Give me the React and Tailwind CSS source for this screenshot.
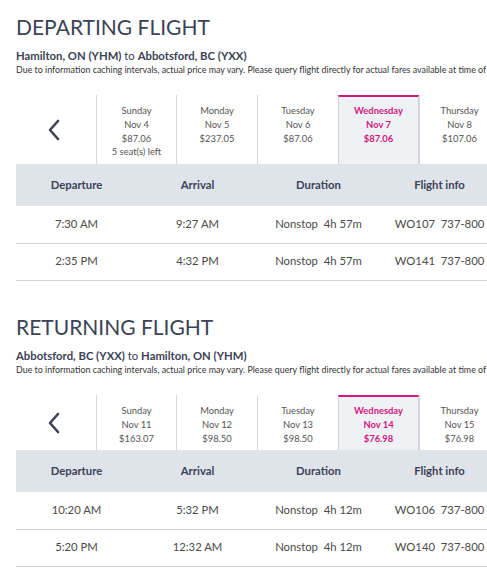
import React from "react";

function Chevron() {
  return (
    <svg width="14" height="22" viewBox="0 0 14 22" fill="none">
      <path d="M11 2 L3 11 L11 20" stroke="#3b4256" strokeWidth="2.6" strokeLinecap="round" strokeLinejoin="round" />
    </svg>
  );
}

function Tab({ day, date, price, extra, selected, w }) {
  if (selected) {
    return (
      <div className="w-[81px] shrink-0 border-t-2 border-t-[#d1187f] border-x border-x-[#cdd0d6] bg-[#f0f1f5] flex flex-col items-center pt-[7px] text-[9.4px] leading-[13.8px] font-bold text-[#d1187f]">
        <div>{day}</div>
        <div>{date}</div>
        <div>{price}</div>
      </div>
    );
  }
  return (
    <div className={`${w} shrink-0 border-l border-l-[#d5d8dd] flex flex-col items-center pt-[9px] text-[9.4px] leading-[13.8px] text-[#555]`}>
      <div>{day}</div>
      <div>{date}</div>
      <div>{price}</div>
      {extra && <div>{extra}</div>}
    </div>
  );
}

function Section({ title, from, to, tabs, rows, tabH }) {
  const widths = ["w-[80px]", "w-[81px]", "w-[81px]", "", "w-[80px]"];
  return (
    <div>
      <h1 className="text-[21px] leading-[24px] font-normal text-[#3b4256]">{title}</h1>
      <div className="mt-[9px] text-[11.3px] leading-[15px] text-[#3b4256]">
        <span className="font-bold">{from}</span> to <span className="font-bold">{to}</span>
      </div>
      <div className="w-[471px] overflow-hidden text-[8.9px] leading-[13px] text-[#333] whitespace-nowrap">
        Due to information caching intervals, actual price may vary. Please query flight directly for actual fares available at time of
      </div>
      <div className={`mt-[19px] flex ${tabH}`}>
        <div className="w-[80px] shrink-0 flex items-center pl-[31px]">
          <Chevron />
        </div>
        {tabs.map((t, i) => (
          <Tab key={i} w={widths[i]} {...t} />
        ))}
      </div>
      <div className="w-[484px]">
        <div className="grid grid-cols-4 h-[42px] bg-[#dfe3ea] items-center text-center text-[11.3px] font-bold text-[#3b4256]">
          <div>Departure</div>
          <div>Arrival</div>
          <div>Duration</div>
          <div>Flight info</div>
        </div>
        {rows.map((r, i) => (
          <div key={i} className="grid grid-cols-4 h-[37.5px] items-center text-center text-[11.3px] text-[#4a4a4a] border-b border-b-[#cfd2d6]">
            <div>{r[0]}</div>
            <div>{r[1]}</div>
            <div className="whitespace-pre">{r[2]}</div>
            <div className="whitespace-pre">{r[3]}</div>
          </div>
        ))}
      </div>
    </div>
  );
}

export default function App() {
  return (
    <div className="w-[487px] h-[571px] overflow-hidden bg-white pl-[16px] pt-[15px]" style={{ fontFamily: "Lato, 'Open Sans', sans-serif" }}>
      <Section
        title="DEPARTING FLIGHT"
        from="Hamilton, ON (YHM)"
        to="Abbotsford, BC (YXX)"
        tabH="h-[69px]"
        tabs={[
          { day: "Sunday", date: "Nov 4", price: "$87.06", extra: "5 seat(s) left" },
          { day: "Monday", date: "Nov 5", price: "$237.05" },
          { day: "Tuesday", date: "Nov 6", price: "$87.06" },
          { day: "Wednesday", date: "Nov 7", price: "$87.06", selected: true },
          { day: "Thursday", date: "Nov 8", price: "$107.06" },
        ]}
        rows={[
          ["7:30 AM", "9:27 AM", "Nonstop  4h 57m", "WO107  737-800"],
          ["2:35 PM", "4:32 PM", "Nonstop  4h 57m", "WO141  737-800"],
        ]}
      />
      <div className="h-[34px]" />
      <Section
        title="RETURNING FLIGHT"
        from="Abbotsford, BC (YXX)"
        to="Hamilton, ON (YHM)"
        tabH="h-[55px]"
        tabs={[
          { day: "Sunday", date: "Nov 11", price: "$163.07" },
          { day: "Monday", date: "Nov 12", price: "$98.50" },
          { day: "Tuesday", date: "Nov 13", price: "$98.50" },
          { day: "Wednesday", date: "Nov 14", price: "$76.98", selected: true },
          { day: "Thursday", date: "Nov 15", price: "$76.98" },
        ]}
        rows={[
          ["10:20 AM", "5:32 PM", "Nonstop  4h 12m", "WO106  737-800"],
          ["5:20 PM", "12:32 AM", "Nonstop  4h 12m", "WO140  737-800"],
        ]}
      />
    </div>
  );
}
